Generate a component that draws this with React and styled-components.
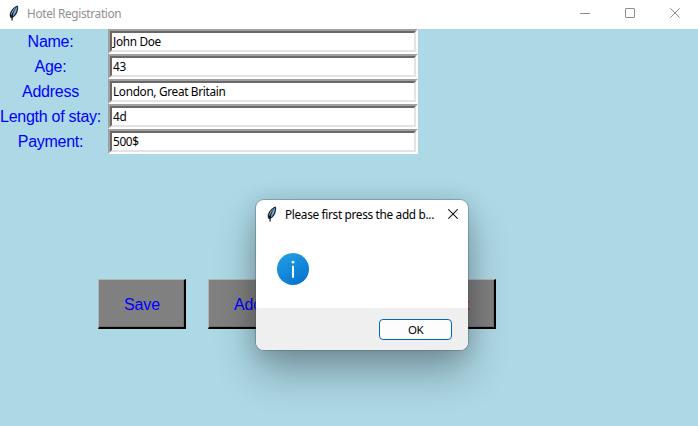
import React from "react";
import styled, { createGlobalStyle } from "styled-components";

const GlobalStyle = createGlobalStyle`
  * { box-sizing: border-box; }
  body { margin: 0; overflow: hidden; background: #add8e6; }
`;

const uiFont = `"Noto Sans", "Open Sans", sans-serif`;
const labelFont = `"Liberation Sans", Arial, sans-serif`;

const Window = styled.main`
  position: relative;
  display: flex;
  flex-direction: column;
  width: 698px;
  height: 426px;
  overflow: hidden;
  background: #add8e6;
`;

const TitleBar = styled.header`
  display: flex;
  align-items: center;
  height: 29px;
  padding: 0 18px 3px 7px;
  background: #fff;
`;

const Title = styled.h1`
  flex: 1;
  margin: 0 0 0 6px;
  font: 400 11.8px/16px ${uiFont};
  letter-spacing: -0.32px;
  white-space: nowrap;
  color: #8f8f8f;
`;

const Controls = styled.div`
  display: flex;
  align-items: center;
  gap: 35px;
`;

const Form = styled.form`
  display: grid;
  grid-template-columns: 101px 310px;
  grid-auto-rows: 25px;
  column-gap: 7px;
  height: 125px;
`;

const Label = styled.label`
  font: 16px/25px ${labelFont};
  letter-spacing: -0.27px;
  text-align: center;
  white-space: nowrap;
  color: #0000ff;
`;

const EntryFrame = styled.div`
  border: 2px solid;
  border-color: #a0a0a0 #fff #fff #a0a0a0;
`;

const Entry = styled.div`
  height: 21px;
  padding-left: 1px;
  border: 2px solid;
  border-color: #696969 #e3e3e3 #e3e3e3 #696969;
  background: #fff;
  font: 400 11.8px/17px ${uiFont};
  letter-spacing: -0.32px;
  white-space: nowrap;
  color: #000;
`;

const ButtonRow = styled.div`
  display: flex;
  gap: 22px;
  margin: 125px 0 0 98px;
`;

const TkButton = styled.button`
  width: ${(p) => p.$width}px;
  height: 50px;
  margin-left: ${(p) => p.$offset || 0}px;
  padding: 2px 24px 0 25px;
  border: 1px solid;
  border-width: 1px 2px 2px 1px;
  border-color: #b4b4b4 #000 #000 #b4b4b4;
  background: #808080;
  box-shadow: inset -1px -1px #707070;
  font: 16px/20px ${labelFont};
  letter-spacing: -0.1px;
  text-align: ${(p) => p.$align || "center"};
  color: ${(p) => p.$color || "#0000ff"};
`;

const Dialog = styled.section`
  position: absolute;
  left: 256px;
  top: 200px;
  display: flex;
  flex-direction: column;
  width: 212px;
  height: 150px;
  border-radius: 8px;
  background: #fff;
  box-shadow: 0 0 0 1px rgba(70, 90, 96, 0.35), 0 22px 40px rgba(0, 0, 0, 0.3),
    0 2px 22px rgba(0, 0, 0, 0.14);
  overflow: hidden;
`;

const DialogBar = styled.header`
  display: flex;
  align-items: center;
  height: 29px;
  padding: 0 10px 1px 9px;
`;

const DialogTitle = styled.h2`
  flex: 1;
  margin: 0 0 0 6px;
  font: 400 11.8px/16px ${uiFont};
  letter-spacing: -0.32px;
  white-space: nowrap;
  color: #000;
`;

const DialogBody = styled.div`
  flex: 1;
  padding: 24px 0 0 21px;
`;

const DialogFooter = styled.footer`
  display: flex;
  justify-content: flex-end;
  height: 42px;
  padding: 11px 16px 0 0;
  background: #efefef;
`;

const OkButton = styled.button`
  width: 73px;
  height: 21px;
  padding: 0;
  border: 1px solid #0067c0;
  border-radius: 4px;
  background: #fdfdfd;
  font: 400 11.5px/19px ${uiFont};
  letter-spacing: -0.5px;
  color: #000;
`;

const Svg = styled.svg`
  display: block;
  flex: none;
`;

const Feather = () => (
  <Svg width="14" height="16" viewBox="0 0 14 16">
    <path d="M10.900.4C8 .9 5 3.600 3.400 7.100c-.9 2.300-1 4 .2 5.800l2.300-.4c2.500-1.300 4.200-3.800 4.900-7 .4-1.800.5-3.700.1-5.100z" fill="#18222d" />
    <path d="M10.200 1.400C8.200 3.200 6.600 6 5.700 11.400c2-1.300 3.300-3.500 3.900-5.900.4-1.400.7-2.700.6-4.100z" fill="#6aa5e0" />
    <path d="M9.300 1.900C6.800 3.400 4.800 6 4.300 8.600l.2 2C5.400 6.800 7.200 4 9.300 1.900z" fill="#a9c2d8" />
    <path d="M5.100 10v5.500" stroke="#111" strokeWidth="1.200" />
  </Svg>
);

const Cross = ({ color, width }) => (
  <Svg width="10" height="10" viewBox="0 0 10 10">
    <path d="M.3.3l9.400 9.400M9.700.3L.3 9.700" stroke={color} strokeWidth={width} />
  </Svg>
);

const InfoIcon = () => (
  <Svg width="32" height="32" viewBox="0 0 32 32">
    <defs>
      <linearGradient id="info" x1="0.2" y1="0" x2="0.8" y2="1">
        <stop offset="0" stopColor="#219ee2" />
        <stop offset="1" stopColor="#0672d0" />
      </linearGradient>
    </defs>
    <circle cx="16" cy="16" r="16" fill="url(#info)" />
    <circle cx="16" cy="9.200" r="1.400" fill="#fff" />
    <path d="M16 12.700v12" stroke="#fff" strokeWidth="1.900" />
  </Svg>
);

const fields = [
  { label: "Name:", value: "John Doe" },
  { label: "Age:", value: "43" },
  { label: "Address", value: "London, Great Britain" },
  { label: "Length of stay:", value: "4d" },
  { label: "Payment:", value: "500$" },
];

export default function App() {
  return (
    <Window>
      <GlobalStyle />
      <TitleBar>
        <Feather />
        <Title>Hotel Registration</Title>
        <Controls>
          <Svg width="10" height="10" viewBox="0 0 10 10">
            <path d="M0 5.500h10" stroke="#8c8c8c" />
          </Svg>
          <Svg width="10" height="10" viewBox="0 0 10 10">
            <rect x=".5" y=".5" width="9" height="9" rx=".5" fill="none" stroke="#8c8c8c" />
          </Svg>
          <Cross color="#8c8c8c" width="1" />
        </Controls>
      </TitleBar>
      <Form>
        {fields.map(({ label, value }) => (
          <React.Fragment key={label}>
            <Label>{label}</Label>
            <EntryFrame>
              <Entry>{value}</Entry>
            </EntryFrame>
          </React.Fragment>
        ))}
      </Form>
      <ButtonRow>
        <TkButton $width={88}>Save</TkButton>
        <TkButton $width={80}>Add</TkButton>
        <TkButton $width={80} $offset={106} $align="right" $color="#dc143c">Exit</TkButton>
      </ButtonRow>
      <Dialog role="dialog">
        <DialogBar>
          <Feather />
          <DialogTitle>Please first press the add b...</DialogTitle>
          <Cross color="#1a1a1a" width="1.1" />
        </DialogBar>
        <DialogBody>
          <InfoIcon />
        </DialogBody>
        <DialogFooter>
          <OkButton>OK</OkButton>
        </DialogFooter>
      </Dialog>
    </Window>
  );
}
